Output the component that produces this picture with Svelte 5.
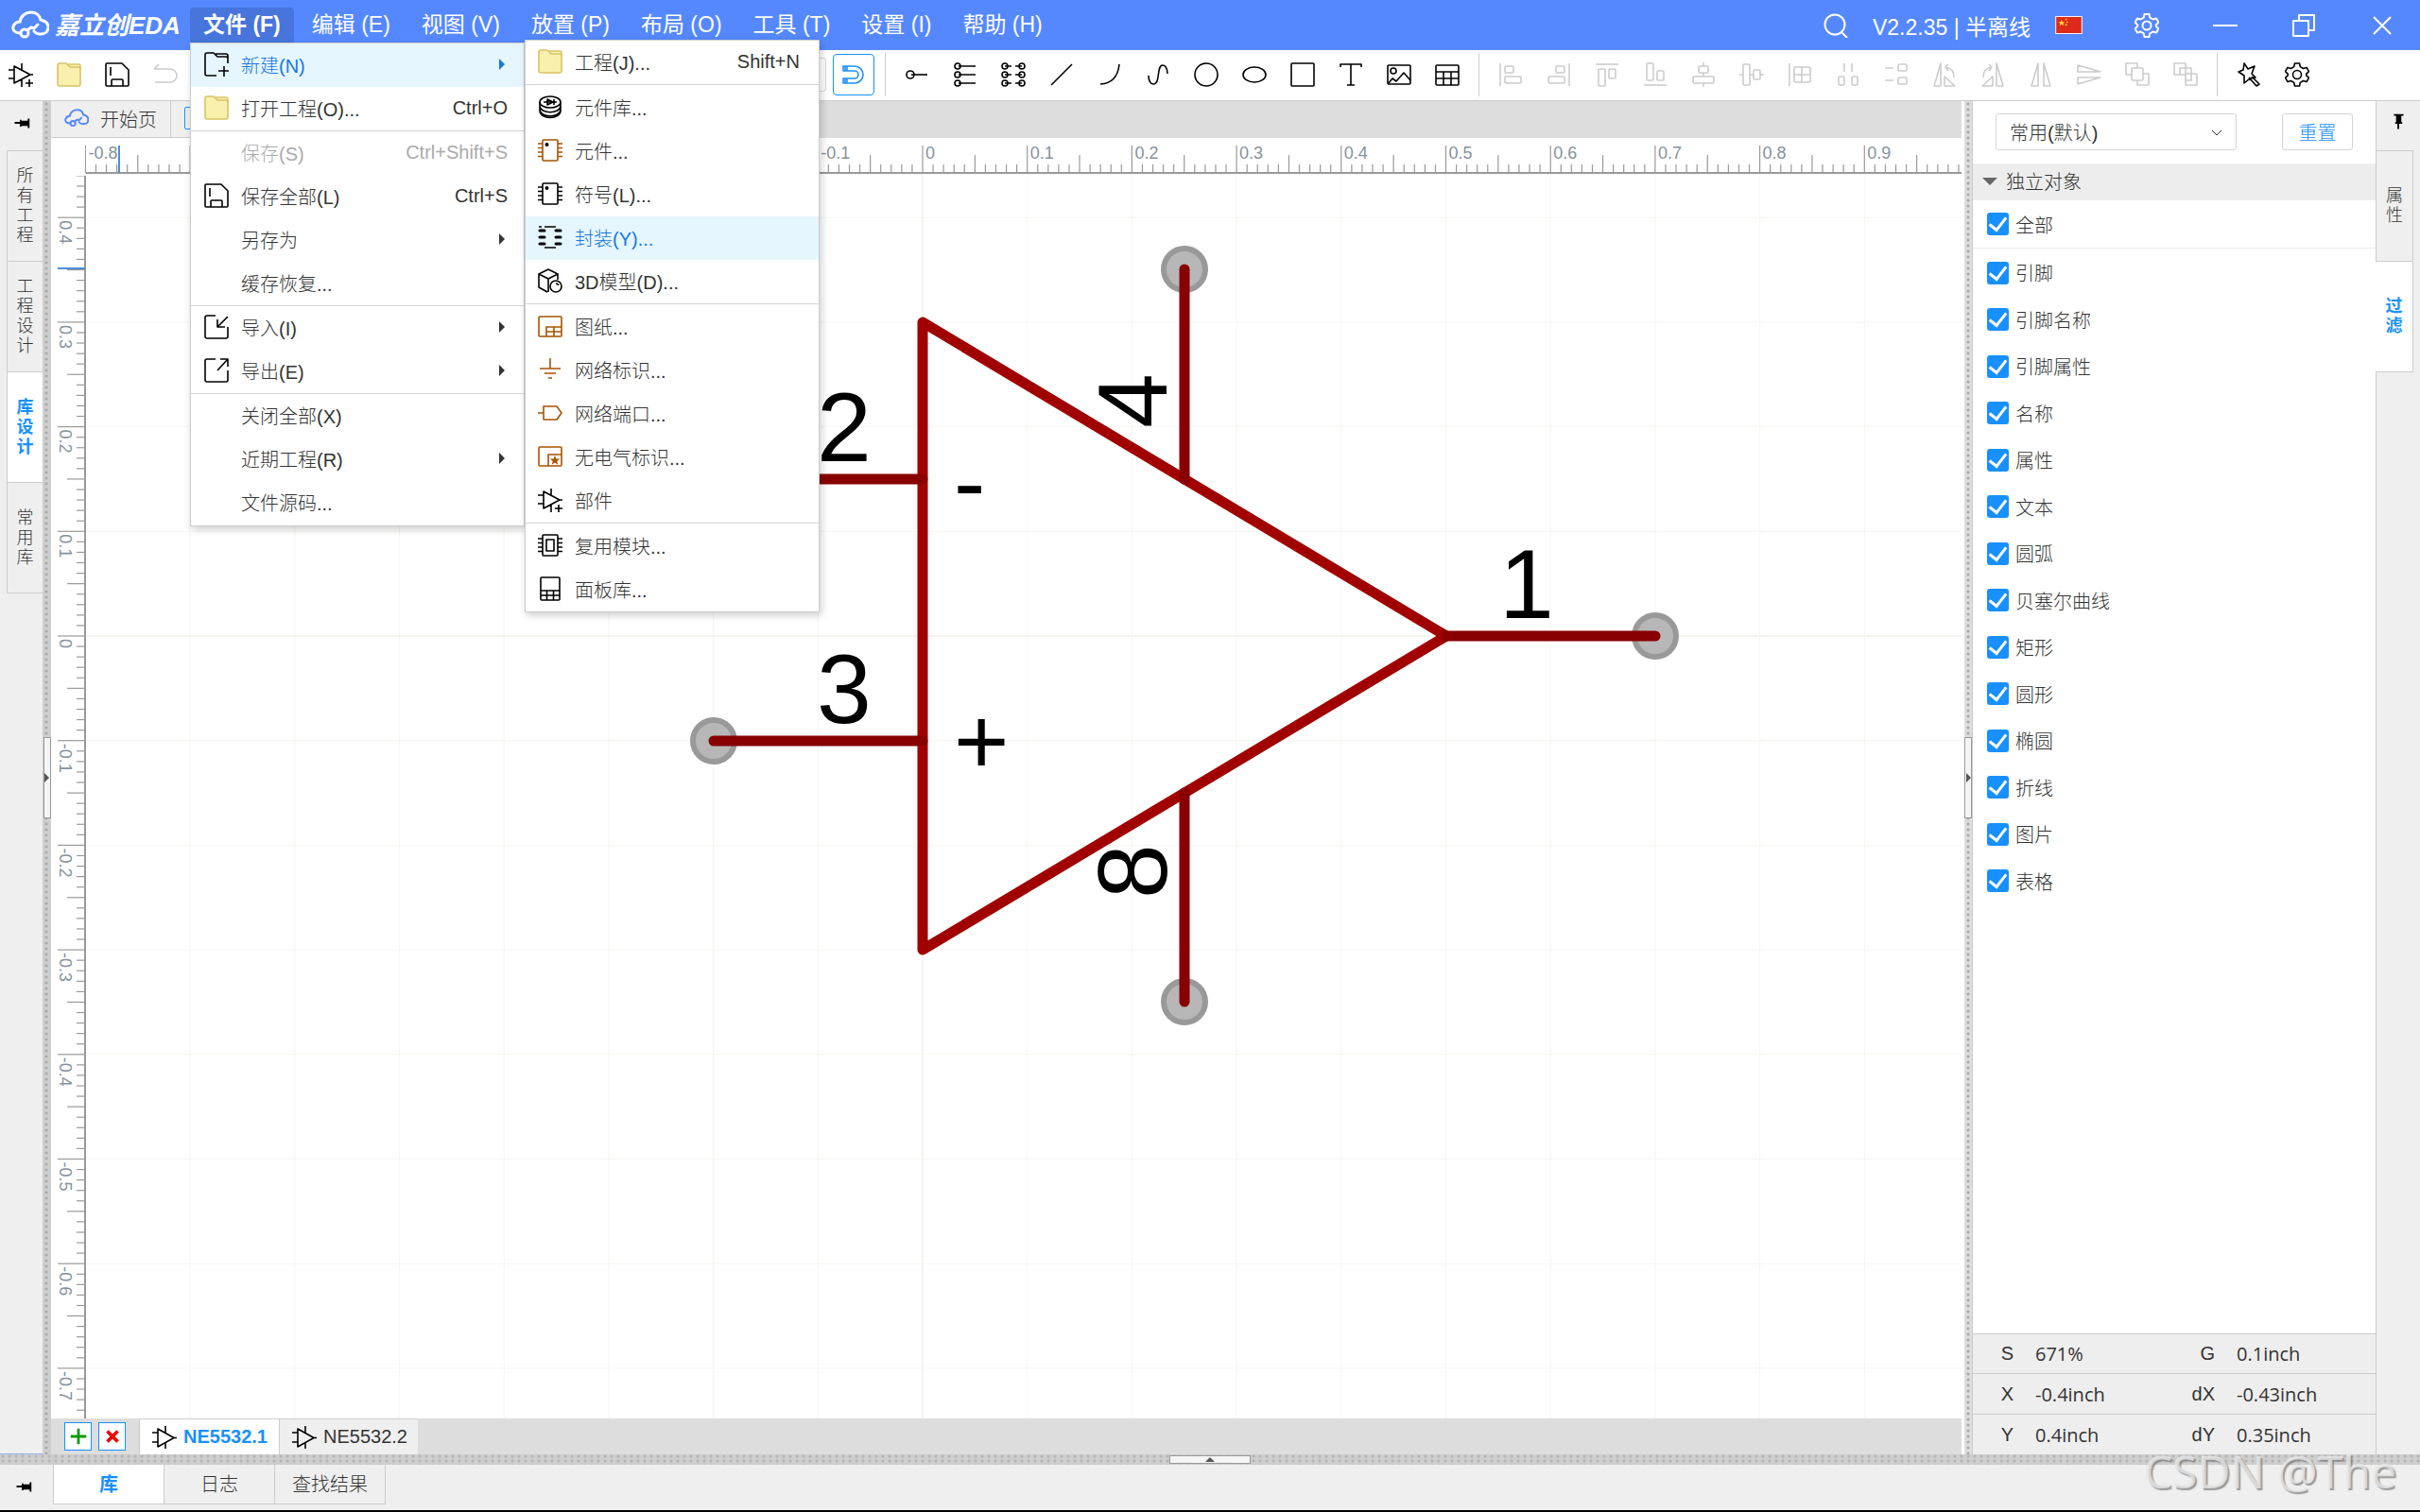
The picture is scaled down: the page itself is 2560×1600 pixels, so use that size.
<script lang="ts">
	type MenuEntry = {
		label: string;
		icon?: string;
		keys?: string;
		arrow?: boolean;
		disabled?: boolean;
		active?: boolean;
	};

	const topMenus = ['编辑 (E)', '视图 (V)', '放置 (P)', '布局 (O)', '工具 (T)', '设置 (I)', '帮助 (H)'];

	const fileMenu: MenuEntry[][] = [
		[
			{ label: '新建(N)', icon: 'newFile', arrow: true, active: true },
			{ label: '打开工程(O)...', icon: 'folder', keys: 'Ctrl+O' }
		],
		[
			{ label: '保存(S)', keys: 'Ctrl+Shift+S', disabled: true },
			{ label: '保存全部(L)', icon: 'save', keys: 'Ctrl+S' },
			{ label: '另存为', arrow: true },
			{ label: '缓存恢复...' }
		],
		[
			{ label: '导入(I)', icon: 'importFile', arrow: true },
			{ label: '导出(E)', icon: 'exportFile', arrow: true }
		],
		[
			{ label: '关闭全部(X)' },
			{ label: '近期工程(R)', arrow: true },
			{ label: '文件源码...' }
		]
	];

	const newMenu: MenuEntry[][] = [
		[{ label: '工程(J)...', icon: 'folder', keys: 'Shift+N' }],
		[
			{ label: '元件库...', icon: 'library' },
			{ label: '元件...', icon: 'device' },
			{ label: '符号(L)...', icon: 'chip' },
			{ label: '封装(Y)...', icon: 'footprint', active: true },
			{ label: '3D模型(D)...', icon: 'model' }
		],
		[
			{ label: '图纸...', icon: 'sheet' },
			{ label: '网络标识...', icon: 'ground' },
			{ label: '网络端口...', icon: 'port' },
			{ label: '无电气标识...', icon: 'mark' },
			{ label: '部件', icon: 'opampAdd' }
		],
		[
			{ label: '复用模块...', icon: 'module' },
			{ label: '面板库...', icon: 'panel' }
		]
	];

	const drawTools = ['pin', 'pins', 'pinPairs', 'line', 'arc', 'curve', 'circle', 'ellipse', 'rect', 'text', 'image', 'table'];
	const arrangeTools = [
		'alignLeft', 'alignRight', 'alignTop', 'alignBottom', 'alignCenter', 'alignMiddle', 'alignGrid',
		'spreadH', 'spreadV', 'rotateLeft', 'rotateRight', 'flipH', 'flipV', 'toFront', 'toBack'
	];

	const leftTabs = ['所有工程', '工程设计', '库设计', '常用库'];
	const rightTabs = ['属性', '过滤'];
	const bottomTabs = ['库', '日志', '查找结果'];

	const filters = [
		'引脚', '引脚名称', '引脚属性', '名称', '属性', '文本', '圆弧',
		'贝塞尔曲线', '矩形', '圆形', '椭圆', '折线', '图片', '表格'
	];

	const status = [
		['S', '671%', 'G', '0.1inch'],
		['X', '-0.4inch', 'dX', '-0.43inch'],
		['Y', '0.4inch', 'dY', '0.35inch']
	];

	// canvas: origin and size of 0.1 inch on screen
	const step = 110.7;
	const ox = 922;
	const oy = 527;
	const rulerX = 37;
	const rulerY = 38;
	const majors = Array.from({ length: 31 }, (_, i) => i - 15);
	const minors = Array.from({ length: 301 }, (_, i) => i - 150).filter((i) => i % 10 !== 0);
	// labels under the open menu are left out
	const labelsX = [-8, -1, 0, 1, 2, 3, 4, 5, 6, 7, 8, 9];
	const labelsY = [4, 3, 2, 1, 0, -1, -2, -3, -4, -5, -6, -7];
	const fmt = (n: number) => (n === 0 ? '0' : (n / 10).toFixed(1));

	// x1/y1 is the free end, tx/ty the start of the number's baseline
	const pins = [
		{ n: '1', x1: 775, y1: 0, x2: 554, y2: 0, tx: 610, ty: -19, r: 0 },
		{ n: '2', x1: -221, y1: -166, x2: 0, y2: -166, tx: -112, ty: -185, r: 0 },
		{ n: '3', x1: -221, y1: 111, x2: 0, y2: 111, tx: -112, ty: 92, r: 0 },
		{ n: '4', x1: 277, y1: -388, x2: 277, y2: -166, tx: 258, ty: -220, r: -90 },
		{ n: '8', x1: 277, y1: 387, x2: 277, y2: 166, tx: 258, ty: 278, r: -90 }
	];

	const chipPins = '<path d="M0 6h5M0 10.500h5M0 15h5M0 19.500h5M21 6h5M21 10.500h5M21 15h5M21 19.500h5"/>';

	const icons: Record<string, string> = {
		opampAdd: '<path d="M6 4v18l17-9zM0 8h6M0 17h6M14 1v7M14 18v8M23 13h3M18 22h8M22 18v8"/>',
		opamp: '<path d="M6 4v19l17-9.500zM0 8h6M0 18h6M14 1v7M14 19v6M23 13.500h3"/>',
		folder:
			'<g fill="#f9f0ae" stroke="#d9c466"><path d="M12 5V2h11q2 0 2 2v3z"/><path d="M1 3q0-2 2-2h7l4 4h9q2 0 2 2v16q0 2-2 2H3q-2 0-2-2z"/></g>',
		save: '<path d="M2 1h16l7 7v16q0 1-1 1H2q-1 0-1-1V2q0-1 1-1zM6 5v9M7 25v-6q0-1 1-1h10q1 0 1 1v6"/>',
		undo: '<path d="M1 7h17a7 7 0 0 1 0 14H2M6 2 1 7"/>',
		magnet: '<path d="M2 4h12a9 9 0 0 1 0 18H2v-5h12a4 4 0 0 0 0-8H2zM6 4v5M6 17v5M4 4v5M4 17v5"/>',
		pin: '<circle cx="6" cy="13" r="4"/><path d="M7 13h17"/>',
		pins: '<circle cx="5" cy="4" r="3"/><circle cx="5" cy="13" r="3"/><circle cx="5" cy="22" r="3"/><path d="M6 4h18M6 13h18M6 22h18"/>',
		pinPairs:
			'<circle cx="4" cy="4" r="3"/><circle cx="4" cy="13" r="3"/><circle cx="4" cy="22" r="3"/><circle cx="22" cy="4" r="3"/><circle cx="22" cy="13" r="3"/><circle cx="22" cy="22" r="3"/><path d="M4 4h7M4 13h7M4 22h7M15 4h7M15 13h7M15 22h7"/>',
		line: '<path d="M2 24 24 2"/>',
		arc: '<path d="M3 23Q21 22 23 2"/>',
		curve: '<path d="M3 14c0 5 2 9 5 9 8 0 3-20 10-20 3 0 5 4 5 9"/>',
		circle: '<circle cx="13" cy="13" r="12"/>',
		ellipse: '<ellipse cx="13" cy="13" rx="12" ry="8"/>',
		rect: '<rect x="1" y="1" width="24" height="24" rx="1"/>',
		text: '<path d="M2 5V2h22v3M13 2v22M9 24h8"/>',
		image: '<rect x="1" y="3" width="24" height="20" rx="1"/><circle cx="7" cy="9" r="3"/><path d="m2 22 4-5 4 3 8-9 7 8"/>',
		table: '<rect x="1" y="3" width="24" height="21" rx="1"/><path d="M1 10h24M1 17h24M9 10v14M17 10v14"/>',
		alignLeft: '<path d="M2 1v24"/><rect x="7" y="4" width="9" height="7" rx="1"/><rect x="7" y="15" width="17" height="7" rx="1"/>',
		alignRight: '<path d="M24 1v24"/><rect x="10" y="4" width="9" height="7" rx="1"/><rect x="2" y="15" width="17" height="7" rx="1"/>',
		alignTop: '<path d="M1 2h24"/><rect x="4" y="7" width="7" height="18" rx="1"/><rect x="15" y="7" width="7" height="10" rx="1"/>',
		alignBottom: '<path d="M1 24h24"/><rect x="4" y="1" width="7" height="18" rx="1"/><rect x="15" y="9" width="7" height="10" rx="1"/>',
		alignCenter: '<path d="M13 0v4M13 11v4M13 22v4"/><rect x="8" y="4" width="10" height="7" rx="1"/><rect x="2" y="15" width="22" height="7" rx="1"/>',
		alignMiddle: '<path d="M0 13h4M11 13h4M22 13h4"/><rect x="4" y="2" width="7" height="22" rx="1"/><rect x="15" y="8" width="7" height="10" rx="1"/>',
		alignGrid: '<path d="M2 1v24M6 13h18M15 5v16"/><rect x="7" y="5" width="17" height="16" rx="1"/>',
		spreadH: '<path d="M9 1v9M17 1v9"/><rect x="3" y="15" width="6" height="9" rx="1"/><rect x="17" y="15" width="6" height="9" rx="1"/>',
		spreadV: '<path d="M1 6h9M1 19h9"/><rect x="15" y="2" width="9" height="7" rx="1"/><rect x="15" y="16" width="9" height="7" rx="1"/>',
		rotateLeft: '<path d="M9 1v24H2zM13 15v10h11zM14 5q9 1 9 11M17 2l-3 3 3 4"/>',
		rotateRight: '<path d="M17 1v24h7zM13 15v10H2zM12 5q-9 1-9 11M9 2l3 3-3 4"/>',
		flipH: '<path d="M10 1v24H3zM16 1v24h7z"/>',
		flipV: '<path d="M1 10h24L1 3zM1 16h24L1 23z"/>',
		toFront: '<path d="M7 13H1V1h12v5M19 12h6v12H13v-5"/><rect x="7" y="6" width="12" height="13" rx="1"/>',
		toBack: '<path d="M7 13H1V1h12v5M19 12h6v12H13v-5M7 13V6h6M13 19h6v-7M13 6h6v6h-6zM7 13h6v6"/>',
		wand: '<path d="m8 1 4 6 7-3-3 8 4 4-6 1-6 5V14L2 10l5-2zM13 16l8 9 3-2-8-8"/>',
		gear: '<path d="M10.500 1h5l.8 3.600 3.200 1.900 3.500-1.100 2.500 4.300-2.700 2.500v1.600l2.700 2.500-2.500 4.300-3.500-1.100-3.200 1.900-.8 3.600h-5l-.8-3.600-3.200-1.900-3.500 1.100L.5 16.300l2.700-2.500v-1.600L.5 9.700 3 5.400l3.500 1.100 3.200-1.900z"/><circle cx="13" cy="13" r="4.500"/>',
		search: '<circle cx="12" cy="12" r="10.500"/><path d="m19 20 6 6"/>',
		minimize: '<path d="M0 13h26"/>',
		restore: '<path d="M2 8h16v16H2zM8 8V2h16v16h-6"/>',
		close: '<path d="m4 4 18 18M22 4 4 22"/>',
		newFile: '<path d="M13 25H3q-2 0-2-2V3q0-2 2-2h7l4 4h9q2 0 2 2v5M12 2h11q2 0 2 2v3M21 15v11M15 20h11"/>',
		importFile: '<path d="M12 1H3q-2 0-2 2v20q0 2 2 2h20q2 0 2-2V13M25 2 14 13M14 5v8h8"/>',
		exportFile: '<path d="M12 1H3q-2 0-2 2v20q0 2 2 2h20q2 0 2-2V13M14 13 25 1M17 1h8v8"/>',
		library:
			'<ellipse cx="13" cy="8" rx="11" ry="6"/><path d="M2 8v9c0 10 22 10 22 0V8M2 12c0 9 22 9 22 0M2 16c0 9 22 9 22 0M6 8h14M10 5v6l6-3zM17 5v6"/>',
		device: `<g stroke="#a65300"><rect x="5" y="2" width="16" height="22" rx="1"/>${chipPins}</g><circle cx="9.500" cy="7" r="1.200" fill="#000"/>`,
		chip: `<rect x="5" y="2" width="16" height="22" rx="1"/>${chipPins}<circle cx="9.500" cy="7" r="1.200" fill="currentColor"/>`,
		footprint:
			'<path d="M7 2h12M7 24h12M1 2h3"/><path stroke-width="3" stroke-linecap="round" d="M2 6h5M2 13h5M2 20h5M19 6h5M19 13h5M19 20h5"/>',
		model: '<path d="M10 25 1 20V6l10-5 10 5v6M1 6l10 5 10-5M11 11v14"/><circle cx="19" cy="19" r="6"/><path d="M19 16q2 0 3 2"/>',
		sheet: '<g stroke="#a65300"><rect x="1" y="3" width="24" height="21" rx="1"/><path d="M9 24V14h16M9 19h16M17 14v10"/></g>',
		ground: '<path stroke="#a65300" d="M13 1v11M2 12h22M7 17h12M11 22h4"/>',
		port: '<path stroke="#a65300" d="M0 13h6M6 6h14l5 7-5 7H6z"/>',
		mark: '<g stroke="#a65300"><rect x="1" y="3" width="24" height="20" rx="1"/><path d="M11 23V11h14"/><path fill="#a65300" stroke="none" d="m18 12 1.400 3.600h3.800l-3 2.400 1.100 3.800-3.300-2.200-3.300 2.200 1.100-3.800-3-2.400h3.800z"/></g>',
		module: `<rect x="5" y="2" width="16" height="22" rx="1"/>${chipPins}<rect x="9" y="7" width="8" height="12"/>`,
		panel: '<rect x="3" y="1" width="20" height="24" rx="1"/><path d="M3 15h20M3 20h20M9.500 15v10M16.500 15v10"/>',
		thumbtack: '<path fill="currentColor" stroke="none" d="M6 12h6v-2l1-1 1 1.500h7V8h2v11h-2v-2.500h-7L13 18l-1-1v-3H6z"/>',
		plus: '<path stroke="#0a9b0a" stroke-width="3" d="M13 4v18M4 13h18"/>',
		cross: '<path stroke="#f00000" stroke-width="4" d="m7 7 12 12M19 7 7 19"/>'
	};
</script>

{#snippet icon(name: string)}
	<svg class="icon" viewBox="0 0 26 26" aria-hidden="true">{@html icons[name]}</svg>
{/snippet}

{#snippet cloud()}
	<svg class="cloud" viewBox="0 0 40 31" aria-hidden="true">
		<path d="M9 24C4 24 1 21 2 17c1-3 3-5 7-5 1-6 6-10 12-10 5 0 9 3 10 8 5 1 8 4 8 8 0 5-4 7-8 7-3 0-5 0-7-3" />
		<circle cx="14" cy="24" r="4" />
		<path d="m17 21 4-3 3 1 4-4" />
	</svg>
{/snippet}

{#snippet menuRows(groups: MenuEntry[][])}
	{#each groups as group, i}
		{#if i > 0}<div class="menu-sep" role="separator"></div>{/if}
		{#each group as item}
			<button class="menu-item" class:active={item.active} disabled={item.disabled} role="menuitem">
				<span class="menu-icon">{#if item.icon}{@render icon(item.icon)}{/if}</span>
				<span class="menu-label">{item.label}</span>
				{#if item.keys}<span class="menu-keys">{item.keys}</span>{/if}
				{#if item.arrow}<span class="menu-arrow"></span>{/if}
			</button>
		{/each}
	{/each}
{/snippet}

<div class="app">
	<header class="titlebar">
		<div class="logo">
			{@render cloud()}
			<span>嘉立创EDA</span>
		</div>
		<nav class="menubar">
			<div class="menu-root">
				<button class="top-item open">文件 (F)</button>
				<div class="menu file-menu" role="menu">
					{@render menuRows(fileMenu)}
					<div class="menu new-menu" role="menu">
						{@render menuRows(newMenu)}
					</div>
				</div>
			</div>
			{#each topMenus as label}
				<button class="top-item">{label}</button>
			{/each}
		</nav>
		<div class="title-right">
			<button class="title-btn" aria-label="search">{@render icon('search')}</button>
			<span class="version">V2.2.35 | 半离线</span>
			<svg class="flag" viewBox="0 0 30 20" aria-hidden="true">
				<rect width="30" height="20" fill="#fff" />
				<rect x="1" y="1" width="28" height="18" fill="#dd2a1b" />
				<path fill="#ffd83b" d="m7 4 1 2.500h2.600l-2 1.700.8 2.600L7 9.200l-2.400 1.600.8-2.600-2-1.700H6zM11 3h2v1.500h-2zM12.500 6H14v1.500h-1.500zM11 9h2v1.500h-2z" />
			</svg>
			<button class="title-btn" aria-label="settings">{@render icon('gear')}</button>
			<button class="title-btn" aria-label="minimize">{@render icon('minimize')}</button>
			<button class="title-btn" aria-label="restore">{@render icon('restore')}</button>
			<button class="title-btn" aria-label="close">{@render icon('close')}</button>
		</div>
	</header>

	<div class="toolbar">
		<div class="tools-file">
			<button class="tool" aria-label="new part">{@render icon('opampAdd')}</button>
			<button class="tool" aria-label="open">{@render icon('folder')}</button>
			<button class="tool" aria-label="save">{@render icon('save')}</button>
			<button class="tool" aria-label="undo" disabled>{@render icon('undo')}</button>
			<span class="tool-field"></span>
		</div>
		<button class="tool snap" aria-label="snap">{@render icon('magnet')}</button>
		<span class="tool-sep"></span>
		{#each drawTools as name}
			<button class="tool" aria-label={name}>{@render icon(name)}</button>
		{/each}
		<span class="tool-sep"></span>
		{#each arrangeTools as name}
			<button class="tool" aria-label={name} disabled>{@render icon(name)}</button>
		{/each}
		<span class="tool-sep"></span>
		<button class="tool" aria-label="wand">{@render icon('wand')}</button>
		<button class="tool" aria-label="preferences">{@render icon('gear')}</button>
	</div>

	<div class="workspace">
		<aside class="dock left">
			<button class="pin-btn" aria-label="unpin">{@render icon('thumbtack')}</button>
			{#each leftTabs as tab}
				<button class="dock-tab" class:active={tab === '库设计'}><span>{tab}</span></button>
			{/each}
		</aside>
		<div class="splitter"><button class="handle" aria-label="collapse left"></button></div>

		<main class="editor">
			<div class="doc-tabs">
				<button class="doc-tab">{@render cloud()}开始页</button>
				<button class="doc-tab current" aria-label="document"><span class="doc-icon"></span></button>
			</div>
			<div class="canvas">
				<svg class="sheet" aria-label="NE5532.1">
					{#each majors as n}
						<line class="grid" class:axis={n === 0} x1={ox + n * step} x2={ox + n * step} y1="0" y2="100%" />
						<line class="grid" class:axis={n === 0} y1={oy + n * step} y2={oy + n * step} x1="0" x2="100%" />
					{/each}

					<g transform="translate({ox} {oy})">
						{#each pins as pin}
							<circle class="pin-end" cx={pin.x1} cy={pin.y1} r="22" />
						{/each}
						<path class="body" d="M0-332V332L554 0z" />
						{#each pins as pin}
							<line class="pin" x1={pin.x1} y1={pin.y1} x2={pin.x2} y2={pin.y2} />
							<text class="pin-number" transform="translate({pin.tx} {pin.ty}) rotate({pin.r})">{pin.n}</text>
						{/each}
						<text class="pin-name" x="33" y="-128">-</text>
						<text class="pin-name" x="33" y="146">+</text>
					</g>

					<rect class="ruler-bg" width="100%" height={rulerY} />
					<rect class="ruler-bg" width={rulerX} height="100%" />
					<svg x={rulerX - 1} y="0" width="100%" height={rulerY}>
						<g transform="translate({1 - rulerX} 0)">
							{#each majors as n}
								<line class="tick" x1={ox + n * step} x2={ox + n * step} y1="8" y2="37" />
							{/each}
							{#each minors as n}
								<line class="tick" x1={ox + (n * step) / 10} x2={ox + (n * step) / 10} y1={n % 5 === 0 ? 18 : 28} y2="37" />
							{/each}
							{#each labelsX as n}
								<text class="ruler-text" x={ox + n * step + 3} y="22">{fmt(n)}</text>
							{/each}
							<line class="ruler-line" x1={rulerX} x2="3000" y1="37" y2="37" />
							<line class="cursor" x1="72" x2="72" y1="8" y2="37" />
						</g>
					</svg>
					<svg x="0" y={rulerY + 2} width={rulerX + 1} height="100%">
						<g transform="translate(0 {-rulerY - 2})">
							{#each majors as n}
								<line class="tick" y1={oy - n * step} y2={oy - n * step} x1="7" x2="36" />
							{/each}
							{#each minors as n}
								<line class="tick" y1={oy - (n * step) / 10} y2={oy - (n * step) / 10} x1={n % 5 === 0 ? 17 : 27} x2="36" />
							{/each}
							{#each labelsY as n}
								<text class="ruler-text" transform="translate(9 {oy - n * step + 3}) rotate(90)">{fmt(n)}</text>
							{/each}
							<line class="ruler-line" x1="36" x2="36" y1="0" y2="3000" />
							<line class="cursor" x1="7" x2="36" y1="138" y2="138" />
						</g>
					</svg>
				</svg>
			</div>
			<div class="sheet-tabs">
				<button class="sheet-btn" aria-label="add">{@render icon('plus')}</button>
				<button class="sheet-btn" aria-label="remove">{@render icon('cross')}</button>
				<button class="sheet-tab active">{@render icon('opamp')}NE5532.1</button>
				<button class="sheet-tab">{@render icon('opamp')}NE5532.2</button>
			</div>
		</main>

		<div class="splitter right"><button class="handle" aria-label="collapse right"></button></div>
		<section class="panel">
			<div class="preset">
				<div class="select-wrap">
					<select aria-label="filter preset"><option>常用(默认)</option></select>
					<svg viewBox="0 0 12 8" aria-hidden="true"><path d="m1 1 5 5 5-5" /></svg>
				</div>
				<button class="reset">重置</button>
			</div>
			<h2>独立对象</h2>
			<label class="check all"><input type="checkbox" checked />全部</label>
			<div class="checks">
				{#each filters as name}
					<label class="check"><input type="checkbox" checked />{name}</label>
				{/each}
			</div>
			<div class="status">
				{#each status as row}
					<div class="status-row">
						{#each row as cell, i}
							<span class={i % 2 ? 'value' : 'key'}>{cell}</span>
						{/each}
					</div>
				{/each}
			</div>
		</section>
		<aside class="dock rightside">
			<button class="pin-btn down" aria-label="unpin">{@render icon('thumbtack')}</button>
			{#each rightTabs as tab}
				<button class="dock-tab" class:active={tab === '过滤'}><span>{tab}</span></button>
			{/each}
			<div class="dock-rest"></div>
		</aside>
	</div>

	<div class="splitter bottom"><button class="handle" aria-label="collapse bottom"></button></div>
	<footer class="bottombar">
		<button class="pin-btn" aria-label="unpin">{@render icon('thumbtack')}</button>
		{#each bottomTabs as tab}
			<button class="bottom-tab" class:active={tab === '库'}>{tab}</button>
		{/each}
	</footer>
	<div class="watermark">CSDN @The</div>
</div>

<style>
	:global(body) {
		margin: 0;
	}

	.app {
		position: relative;
		display: flex;
		flex-direction: column;
		height: 100vh;
		box-sizing: border-box;
		border-bottom: 2px solid #000;
		overflow: hidden;
		background: #efefef;
		color: #333;
		font-family: "Liberation Sans", "Noto Sans CJK SC", sans-serif;
		font-size: 20px;
		font-weight: 300;
	}

	.app :global(*) {
		box-sizing: border-box;
	}

	button {
		margin: 0;
		padding: 0;
		border: 0;
		background: none;
		color: inherit;
		font: inherit;
		white-space: nowrap;
	}

	.icon {
		flex: none;
		width: 26px;
		height: 26px;
		fill: none;
		stroke: currentColor;
		stroke-width: 1.6;
		stroke-linejoin: round;
	}

	.cloud {
		flex: none;
		width: 40px;
		height: 31px;
		fill: none;
		stroke: currentColor;
		stroke-width: 3;
		stroke-linecap: round;
	}

	/* Title bar */
	.titlebar {
		display: flex;
		align-items: center;
		flex: none;
		height: 53px;
		padding: 0 27px 0 12px;
		background: #5588ff;
		color: #fff;
		font-size: 23px;
		font-weight: 400;
	}

	.logo {
		display: flex;
		align-items: center;
		gap: 6px;
		width: 189px;
		font-size: 26px;
		font-weight: 700;
		font-style: italic;
		line-height: 30px;
		white-space: nowrap;
	}

	.menubar {
		display: flex;
		gap: 5px;
		flex: 1;
	}

	.menu-root {
		position: relative;
	}

	.top-item {
		height: 37px;
		padding: 0 14px;
		border-radius: 4px 4px 0 0;
		line-height: 37px;
	}

	.top-item.open {
		background: #4775dc;
		font-weight: 700;
	}

	.title-right {
		display: flex;
		align-items: center;
	}

	.version {
		margin: 0 26px;
	}

	.flag {
		width: 29px;
		height: 19px;
		margin-right: 55px;
	}

	.title-btn {
		display: flex;
	}

	.title-btn + .title-btn {
		margin-left: 57px;
	}

	.title-btn .icon {
		stroke-width: 2;
	}

	/* Drop-down menus */
	.menu {
		position: absolute;
		z-index: 10;
		border: 1px solid #ccc;
		background: #fff;
		box-shadow: 2px 3px 8px rgba(0, 0, 0, 0.2);
		color: #333;
		font-size: 20px;
		font-weight: 300;
	}

	.file-menu {
		top: 37px;
		left: 0;
		width: 354px;
		padding-bottom: 1px;
	}

	.new-menu {
		top: -4px;
		left: 353px;
		width: 312px;
	}

	.menu-item {
		display: flex;
		align-items: center;
		width: 100%;
		height: 46px;
		padding: 0 20px 2px 14px;
	}

	.new-menu .menu-item {
		padding-left: 13px;
	}

	.menu-item.active {
		background: #e6f6ff;
		color: #1677e0;
	}

	.menu-item:disabled {
		color: #aaa;
	}

	.menu-icon {
		display: flex;
		width: 39px;
		color: #000;
	}

	.menu-label {
		flex: 1;
		text-align: left;
	}

	.menu-arrow {
		margin-right: 3px;
		border: 6px solid transparent;
		border-left-color: currentColor;
		border-right-width: 0;
	}

	.file-menu > .menu-item {
		padding-right: 17px;
	}

	.menu-sep {
		height: 2px;
		border-top: 1px solid #d4d4d4;
	}

	.file-menu > .menu-sep {
		height: 1px;
	}

	/* Toolbar */
	.toolbar {
		display: flex;
		align-items: center;
		gap: 7px;
		flex: none;
		height: 54px;
		padding-bottom: 1px;
		border-bottom: 1px solid #ccc;
		background: #fff;
		color: #000;
	}

	.tools-file {
		display: flex;
		align-items: center;
		gap: 7px;
		width: 874px;
	}

	.tool {
		display: flex;
		align-items: center;
		justify-content: center;
		flex: none;
		width: 44px;
		height: 44px;
	}

	.tool:disabled {
		color: #ccc;
	}

	.tool.snap {
		border: 1px solid #1890ff;
		border-radius: 4px;
		color: #1890ff;
	}

	.tool-field {
		flex: 1;
		height: 36px;
		border: 1px solid #d9d9d9;
		border-radius: 3px;
	}

	.tool-sep {
		flex: none;
		width: 1px;
		height: 46px;
		margin: 0 4px;
		background: #ccc;
	}

	/* Docks and splitters */
	.workspace {
		display: flex;
		flex: 1;
		min-height: 0;
	}

	.dock {
		display: flex;
		flex-direction: column;
		flex: none;
	}

	.dock.left {
		width: 45px;
		padding-left: 7px;
		border-bottom: 1px solid #8fb6e6;
	}

	.pin-btn {
		display: flex;
		align-items: center;
		justify-content: center;
		flex: none;
		height: 52px;
		padding-bottom: 6px;
		color: #000;
	}

	.dock.left .pin-btn {
		padding-right: 8px;
	}

	.pin-btn .icon {
		width: 24px;
		height: 24px;
	}

	.pin-btn.down .icon {
		transform: rotate(-90deg);
	}

	.dock-tab {
		display: flex;
		align-items: center;
		justify-content: center;
		height: 118px;
		border: 1px solid #ccc;
		border-right: 0;
		font-size: 18px;
		line-height: 21px;
		white-space: normal;
	}

	.dock-tab + .dock-tab {
		height: 117px;
		border-top: 0;
	}

	.dock-tab span {
		width: 18px;
		word-break: break-all;
	}

	.dock-tab.active {
		background: #fff;
		color: #1890ff;
		font-weight: 700;
	}

	.dock.rightside {
		width: 47px;
	}

	.rightside .pin-btn,
	.dock-rest {
		border-left: 1px solid #ccc;
	}

	.dock-rest {
		flex: 1;
	}

	.rightside .dock-tab {
		margin-right: 7px;
		border-right: 1px solid #ccc;
	}

	.rightside .dock-tab.active {
		border-left: 0;
	}

	.splitter {
		display: flex;
		align-items: center;
		justify-content: center;
		flex: none;
		width: 9px;
		background: #cecece radial-gradient(circle at 4px 3px, #aaa 1px, transparent 2px) 0 0 / 9px 6px;
	}

	.splitter.right {
		border-right: 1px solid #ccc;
		background-color: #ddd;
	}

	.splitter.bottom {
		width: auto;
		height: 11px;
		background: #cecece radial-gradient(circle at 3px 2px, #b5b5b5 1px, transparent 2px) 0 0 / 7px 5px;
	}

	.handle {
		display: flex;
		align-items: center;
		justify-content: center;
		width: 8px;
		height: 86px;
		border: 1px solid #999;
		background: #f5f5f5;
	}

	.handle::after {
		border: 5px solid transparent;
		border-left-color: #555;
		border-right-width: 0;
		content: '';
	}

	.bottom .handle {
		width: 86px;
		height: 9px;
	}

	.bottom .handle::after {
		border: 5px solid transparent;
		border-bottom-color: #555;
		border-top-width: 0;
	}

	/* Editor */
	.editor {
		display: flex;
		flex-direction: column;
		flex: 1;
		min-width: 0;
		border-right: 3px solid #fff;
	}

	.doc-tabs {
		display: flex;
		flex: none;
		height: 39px;
		background: #ddd;
	}

	.doc-tab {
		display: flex;
		align-items: center;
		gap: 12px;
		padding: 0 14px 2px;
		border-right: 1px solid #ccc;
		border-bottom: 1px solid #ccc;
		background: #efefef;
	}

	.doc-tab .cloud {
		width: 26px;
		height: 22px;
		color: #5588ff;
	}

	.doc-icon {
		width: 22px;
		height: 24px;
		border: 1px solid #1890ff;
		border-radius: 2px;
	}

	.canvas {
		flex: 1;
		min-height: 0;
		background: #fff;
	}

	.sheet {
		display: block;
		width: 100%;
		height: 100%;
	}

	.grid {
		stroke: #f5f5f1;
		stroke-width: 1;
	}

	.grid.axis {
		stroke: #e8e8e0;
	}

	.ruler-bg {
		fill: #fff;
	}

	.tick {
		stroke: #999;
		stroke-width: 1.2;
	}

	.ruler-line {
		stroke: #999;
		stroke-width: 2;
	}

	.ruler-text {
		fill: #8592a0;
		font-size: 18px;
	}

	.cursor {
		stroke: #4a8fdc;
		stroke-width: 2;
	}

	.body {
		fill: none;
		stroke: #a00000;
		stroke-width: 11;
		stroke-linejoin: round;
	}

	.pin {
		stroke: #880000;
		stroke-width: 11;
		stroke-linecap: round;
	}

	.pin-end {
		fill: #b7b7b7;
		stroke: #999;
		stroke-width: 6;
	}

	.pin-number {
		fill: #000;
		font-size: 104px;
	}

	.pin-name {
		fill: #000;
		font-size: 100px;
	}

	.sheet-tabs {
		display: flex;
		align-items: center;
		flex: none;
		height: 38px;
		padding-left: 14px;
		background: #ddd;
	}

	.sheet-btn {
		display: flex;
		align-items: center;
		justify-content: center;
		width: 29px;
		height: 30px;
		margin-right: 7px;
		border: 1px solid #1890ff;
		background: #fff;
	}

	.sheet-btn .icon {
		width: 24px;
		height: 24px;
	}

	.sheet-tab {
		display: flex;
		align-items: center;
		gap: 7px;
		width: 147px;
		height: 38px;
		padding-left: 13px;
		border: 1px solid #ccc;
		border-width: 1px 0 0 1px;
		background: #efefef;
	}

	.sheet-tab .icon {
		color: #000;
	}

	.sheet-tab.active {
		width: 148px;
		margin-left: 7px;
		background: #fff;
		color: #1890ff;
		font-weight: 700;
	}

	/* Filter panel */
	.panel {
		display: flex;
		flex-direction: column;
		flex: none;
		width: 426px;
		background: #fff;
	}

	.preset {
		display: flex;
		justify-content: space-between;
		padding: 13px 24px 14px;
	}

	.select-wrap {
		position: relative;
	}

	.select-wrap svg {
		position: absolute;
		top: 17px;
		right: 15px;
		width: 12px;
		height: 8px;
		fill: none;
		stroke: #333;
		pointer-events: none;
	}

	select {
		width: 255px;
		height: 39px;
		padding: 2px 14px 0;
		border: 1px solid #d4d4d4;
		border-radius: 3px;
		background: #fff;
		color: #333;
		font: inherit;
		appearance: none;
	}

	.reset {
		width: 75px;
		height: 39px;
		border: 1px solid #d4d4d4;
		border-radius: 3px;
		color: #1890ff;
	}

	h2 {
		display: flex;
		align-items: center;
		gap: 9px;
		height: 39px;
		margin: 0;
		padding: 0 0 2px 10px;
		background: #ededed;
		font-size: 20px;
		font-weight: 300;
	}

	h2::before {
		border: 8px solid transparent;
		border-top-color: #666;
		border-bottom-width: 0;
		content: '';
	}

	.check {
		display: flex;
		align-items: center;
		gap: 7px;
		padding-left: 15px;
	}

	.check.all {
		height: 51px;
		border-bottom: 1px solid #eaeaea;
	}

	.checks {
		display: grid;
		grid-auto-rows: 1fr;
		min-height: 694px;
		padding-top: 1px;
	}

	input {
		display: grid;
		place-content: center;
		width: 23px;
		height: 24px;
		margin: 0;
		border-radius: 3px;
		background: #1890ff;
		appearance: none;
	}

	input::after {
		width: 8px;
		height: 15px;
		border: solid #fff;
		border-width: 0 3px 3px 0;
		transform: translateY(-2px) rotate(38deg);
		content: '';
	}

	.status {
		margin-top: auto;
		background: #eee;
	}

	.status-row {
		display: grid;
		grid-template-columns: 43px 170px 43px 1fr;
		align-items: center;
		height: 42px;
		border-top: 1px solid #ccc;
	}

	.status-row + .status-row {
		height: 43px;
	}

	.key {
		text-align: right;
	}

	.value {
		padding-left: 23px;
		font-family: "Open Sans", sans-serif;
		font-weight: 400;
	}

	/* Bottom bar */
	.bottombar {
		display: flex;
		flex: none;
		height: 48px;
	}

	.bottombar .pin-btn {
		width: 56px;
		height: 46px;
		padding: 0 8px 0 0;
	}

	.bottom-tab {
		width: 117px;
		height: 42px;
		padding-bottom: 2px;
		border: 1px solid #ccc;
		border-width: 0 1px 1px 0;
	}

	.bottom-tab.active {
		width: 118px;
		border-left-width: 1px;
		background: #fff;
		color: #1890ff;
		font-weight: 700;
	}

	.watermark {
		position: absolute;
		right: 25px;
		bottom: 8px;
		color: rgba(232, 232, 232, 0.8);
		font-family: "Noto Sans", sans-serif;
		font-size: 48px;
		font-weight: 400;
		line-height: 66px;
		text-shadow: 2px 2px 1px rgba(120, 120, 120, 0.7);
		pointer-events: none;
	}
</style>
